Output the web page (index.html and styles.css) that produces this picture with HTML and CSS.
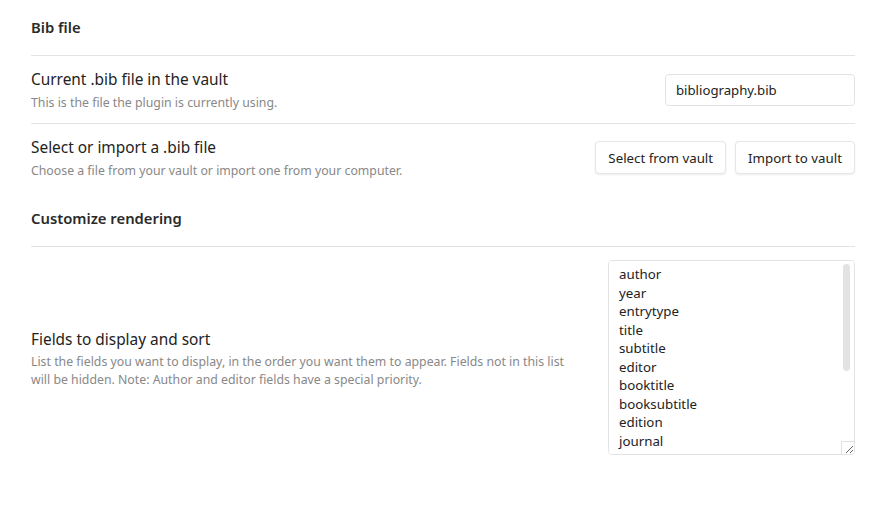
FILE: index.html
```html
<!DOCTYPE html>
<html>
<head>
<meta charset="utf-8">
<link rel="stylesheet" href="styles.css">
</head>
<body>
<div class="settings">
  <div class="heading">Bib file</div>
  <div class="item bordered">
    <div class="info">
      <div class="name">Current .bib file in the vault</div>
      <div class="desc">This is the file the plugin is currently using.</div>
    </div>
    <div class="control">
      <input class="text-input" type="text" value="bibliography.bib">
    </div>
  </div>
  <div class="item">
    <div class="info">
      <div class="name">Select or import a .bib file</div>
      <div class="desc">Choose a file from your vault or import one from your computer.</div>
    </div>
    <div class="control">
      <button class="btn">Select from vault</button>
      <button class="btn">Import to vault</button>
    </div>
  </div>
  <div class="heading">Customize rendering</div>
  <div class="item fields">
    <div class="info">
      <div class="name">Fields to display and sort</div>
      <div class="desc">List the fields you want to display, in the order you want them to appear. Fields not in this list will be hidden. Note: Author and editor fields have a special priority.</div>
    </div>
    <div class="control">
      <div class="area-wrap">
        <textarea class="area" spellcheck="false">author
year
entrytype
title
subtitle
editor
booktitle
booksubtitle
edition
journal
series
volume
number
pages
address
publisher
doi
url</textarea>
        <div class="thumb"></div>
        <div class="corner"></div>
      </div>
    </div>
  </div>
</div>
</body>
</html>
```

FILE: styles.css
```css
html, body {
  margin: 0;
  padding: 0;
  background: #ffffff;
}
body {
  font-family: "Noto Sans", "Open Sans", sans-serif;
  color: #222222;
}
.settings {
  width: 824px;
  margin-left: 31px;
  display: flex;
  flex-direction: column;
}
.heading {
  box-sizing: content-box;
  height: 53px;
  padding-bottom: 2px;
  display: flex;
  align-items: center;
  font-size: 14.8px;
  font-weight: 600;
  color: #2a2a2a;
  border-bottom: 1px solid #e3e3e3;
}
.item {
  display: flex;
  align-items: center;
  padding: 11px 0 11px;
}
.item.bordered {
  border-bottom: 1px solid #e3e3e3;
}
.item.fields {
  padding: 13px 0 13px;
}
.info {
  flex: 1 1 auto;
  margin-right: 20px;
  min-width: 0;
}
.name {
  font-size: 15.4px;
  line-height: 26px;
  color: #222222;
}
.desc {
  font-size: 12.3px;
  line-height: 18px;
  color: #888888;
  margin-top: 1px;
}
.fields .desc {
  max-width: 545px;
  margin-top: 0;
}
.control {
  flex: 0 0 auto;
  display: flex;
  gap: 9px;
  align-items: center;
}
.text-input {
  width: 190px;
  height: 32px;
  box-sizing: border-box;
  border: 1px solid #e3e3e3;
  border-radius: 4px;
  padding: 0 10px;
  font-family: inherit;
  font-size: 13.2px;
  color: #222222;
  background: #ffffff;
  outline: none;
}
.btn {
  height: 33px;
  box-sizing: border-box;
  padding: 0 12px;
  border: 1px solid #e6e6e6;
  border-radius: 4px;
  background: #ffffff;
  font-family: inherit;
  font-size: 13.3px;
  color: #222222;
  box-shadow: 0 1px 2px rgba(0, 0, 0, 0.08);
  cursor: pointer;
}
.area-wrap {
  position: relative;
}
.area {
  width: 247px;
  height: 195px;
  box-sizing: border-box;
  border: 1px solid #e3e3e3;
  border-radius: 4px;
  padding: 4px 10px;
  font-family: inherit;
  font-size: 13.3px;
  line-height: 18.5px;
  color: #222222;
  background: #ffffff;
  outline: none;
  resize: both;
  display: block;
}
.thumb {
  position: absolute;
  left: 235px;
  top: 4px;
  width: 7px;
  height: 107px;
  border-radius: 4px;
  background: #e3e3e3;
}
.corner {
  position: absolute;
  left: 233px;
  top: 181px;
  width: 13px;
  height: 13px;
  border-left: 1px solid #e0e0e0;
  border-top: 1px solid #e0e0e0;
  pointer-events: none;
}
```
